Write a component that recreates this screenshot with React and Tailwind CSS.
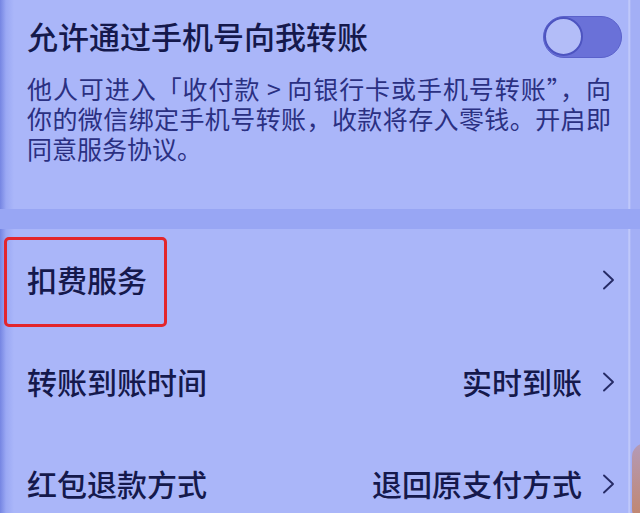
import React from "react";

const font = "font-['Noto_Sans_CJK_SC','Noto_Sans',sans-serif]";

function Chevron() {
  return (
    <svg width="13" height="20" viewBox="0 0 13 20" fill="none" className="shrink-0">
      <polyline points="2,1.5 11,10 2,18.5" stroke="#262b66" strokeWidth="1.9" strokeLinecap="round" strokeLinejoin="round" />
    </svg>
  );
}

function Row({ label, value, boxed }) {
  return (
    <div className="relative flex items-center justify-between h-[102px] pl-[27px] pr-[25px]">
      {boxed && (
        <div className="absolute left-[4px] top-[8px] w-[163px] h-[90px] border-[3px] border-[#e3262c] rounded-[5px]" />
      )}
      <span className="text-[30px] leading-[40px] font-medium text-[#15194c] -mt-[2px]">{label}</span>
      <div className="flex items-center gap-[20px]">
        {value && (
          <span className="text-[30px] leading-[40px] font-medium text-[#15194c] -mt-[2px]">{value}</span>
        )}
        <Chevron />
      </div>
    </div>
  );
}

export default function App() {
  return (
    <div
      className={`relative w-[640px] h-[513px] overflow-hidden ${font} bg-[linear-gradient(to_right,#7585e2_0px,#9aa8f4_6px,#aab6f9_14px,#aab6f9_628px,#c9d0fb_629px,#a3aff6_631px)]`}
    >
      <div className="pl-[27px] pr-[18px]">
        <div className="flex items-center justify-between h-[42px] mt-[16px]">
          <span className="text-[31px] leading-[40px] font-medium text-[#15194c] -mt-[3px]">
            允许通过手机号向我转账
          </span>
          <div className="relative w-[79px] h-[42px] rounded-full bg-[#6a71d8] border-[1.5px] border-[#5a61cb]">
            <div className="absolute left-[0px] top-[0px] w-[39px] h-[39px] rounded-full bg-[#b3bdf8] border-[2px] border-[#4d54c0]" />
          </div>
        </div>
        <div className="mt-[15px] w-[584px] text-[25px] leading-[30px] text-[#2a3082]">
          <div className="text-justify [text-align-last:justify]">他人可进入「收付款 &gt; 向银行卡或手机号转账”，向</div>
          <div className="text-justify [text-align-last:justify]">你的微信绑定手机号转账，收款将存入零钱。开启即</div>
          <div>同意服务协议。</div>
        </div>
      </div>
      <div className="mt-[46px] h-[20px] bg-[#98a6f4]" />
      <Row label="扣费服务" boxed />
      <Row label="转账到账时间" value="实时到账" />
      <Row label="红包退款方式" value="退回原支付方式" />
      <div className="absolute right-[-6px] bottom-[-10px] w-[14px] h-[80px] rounded-l-full bg-[linear-gradient(to_bottom,#b49ab8,#c2856a)]" />
    </div>
  );
}
